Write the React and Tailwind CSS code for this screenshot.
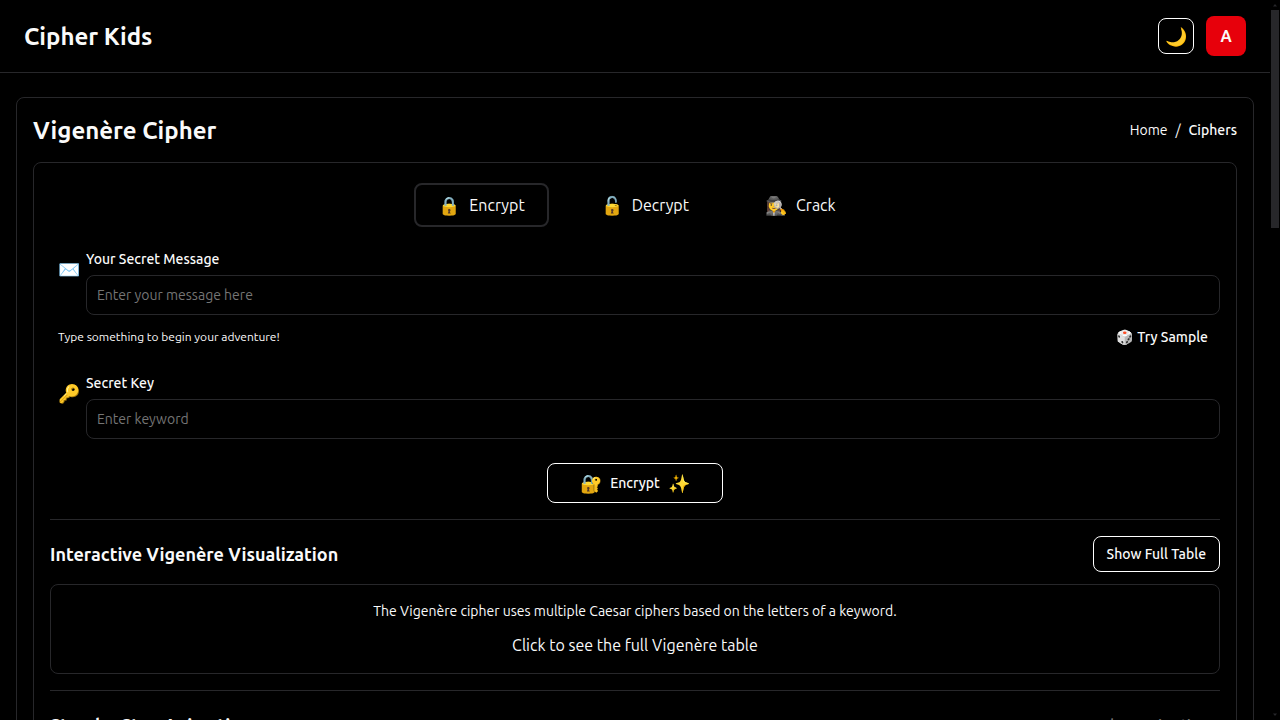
import { useState } from "react";

const TABS = [
  { id: "encrypt", label: "Encrypt", emoji: "🔒" },
  { id: "decrypt", label: "Decrypt", emoji: "🔓" },
  { id: "crack", label: "Crack", emoji: "🕵️‍♀️" },
];

function Header() {
  return (
    <header className="flex shrink-0 items-center justify-between border-b border-[#27272a] px-6 py-4">
      <h1 className="h-8 text-2xl leading-[34px] font-semibold">Cipher Kids</h1>
      <div className="flex items-center gap-3">
        <button
          type="button"
          aria-label="Toggle theme"
          className="flex size-9 items-center justify-center rounded-lg border border-white text-lg"
        >
          🌙
        </button>
        <button
          type="button"
          aria-label="Account"
          className="flex size-10 items-center justify-center rounded-lg bg-[#e7000b] font-bold"
        >
          A
        </button>
      </div>
    </header>
  );
}

function Field({ id, emoji, label, placeholder }) {
  return (
    <div className="flex items-start gap-1.5 pl-2">
      <span className="mt-1.5 flex h-7 items-center text-lg" aria-hidden="true">
        {emoji}
      </span>
      <div className="flex-1">
        <label htmlFor={id} className="mb-1.5 block text-sm font-medium">
          {label}
        </label>
        <input
          id={id}
          type="text"
          placeholder={placeholder}
          className="block h-10 w-full rounded-lg border border-[#27272a] bg-black px-2.5 text-sm placeholder:text-[#757575]"
        />
      </div>
    </div>
  );
}

function Scrollbar() {
  return (
    <div className="flex w-2.5 shrink-0 flex-col items-center justify-between" aria-hidden="true">
      <div className="flex w-full flex-col items-center">
        <svg viewBox="0 0 10 10" className="size-2.5 fill-[#27272a]">
          <path d="M5 4 7 6.500H3Z" />
        </svg>
        <div className="h-[218px] w-2 bg-[#27272a]" />
      </div>
      <svg viewBox="0 0 10 10" className="size-2.5 fill-[#27272a]">
        <path d="M5 6 7 3.500H3Z" />
      </svg>
    </div>
  );
}

export default function App() {
  const [mode, setMode] = useState("encrypt");

  return (
    <div className="flex h-screen bg-black font-['Ubuntu','Noto_Sans',sans-serif] text-[#fafafa]">
      <div className="flex min-w-0 flex-1 flex-col overflow-hidden">
        <Header />
        <main className="px-4 pt-6">
          <div className="rounded-lg border border-[#27272a] p-4">
            <div className="mb-4 flex items-center justify-between">
              <h2 className="h-8 text-2xl leading-[34px] font-semibold">Vigenère Cipher</h2>
              <nav aria-label="Breadcrumb" className="flex gap-2 text-sm">
                <a href="#home">Home</a>
                <span>/</span>
                <a href="#ciphers" className="font-medium">
                  Ciphers
                </a>
              </nav>
            </div>

            <div className="rounded-lg border border-[#27272a] px-4 pt-5 pb-4">
              <div className="flex justify-center gap-7 pl-1">
                {TABS.map((tab) => (
                  <button
                    key={tab.id}
                    type="button"
                    onClick={() => setMode(tab.id)}
                    className={`flex h-11 items-center gap-[9px] rounded-lg border-2 px-[22px] ${
                      mode === tab.id ? "border-[#27272a]" : "border-transparent"
                    }`}
                  >
                    <span className="text-lg">{tab.emoji}</span>
                    {tab.label}
                  </button>
                ))}
              </div>

              <div className="mt-[22px]">
                <Field
                  id="message"
                  emoji="✉️"
                  label="Your Secret Message"
                  placeholder="Enter your message here"
                />
              </div>
              <div className="mt-1 flex h-9 items-center justify-between pl-2">
                <p className="text-xs">Type something to begin your adventure!</p>
                <button type="button" className="flex h-9 items-center gap-1 px-3 text-sm font-medium">
                  <span>🎲</span>
                  Try Sample
                </button>
              </div>

              <div className="mt-[18px]">
                <Field id="key" emoji="🔑" label="Secret Key" placeholder="Enter keyword" />
              </div>

              <div className="mt-6 flex justify-center">
                <button
                  type="button"
                  className="flex h-10 items-center gap-2 rounded-lg border border-white px-8 text-sm font-medium"
                >
                  <span className="text-lg">🔐</span>
                  Encrypt
                  <span className="text-lg">✨</span>
                </button>
              </div>

              <section className="mt-4 border-t border-[#27272a] pt-4">
                <div className="mb-3 flex items-center justify-between">
                  <h3 className="text-lg font-semibold">Interactive Vigenère Visualization</h3>
                  <button
                    type="button"
                    className="h-9 rounded-lg border border-white px-[13px] text-sm font-medium"
                  >
                    Show Full Table
                  </button>
                </div>
                <div className="rounded-lg border border-[#27272a] p-4 text-center">
                  <p className="mb-3 text-sm">
                    The Vigenère cipher uses multiple Caesar ciphers based on the letters of a keyword.
                  </p>
                  <p>Click to see the full Vigenère table</p>
                </div>
              </section>

              <section className="mt-4 border-t border-[#27272a] pt-4">
                <div className="flex items-center justify-between">
                  <h3 className="text-lg font-semibold">Step-by-Step Animation</h3>
                  <button
                    type="button"
                    disabled
                    className="h-9 rounded-lg px-[13px] text-sm font-medium opacity-50"
                  >
                    Show Animation
                  </button>
                </div>
              </section>
            </div>
          </div>
        </main>
      </div>
      <Scrollbar />
    </div>
  );
}
